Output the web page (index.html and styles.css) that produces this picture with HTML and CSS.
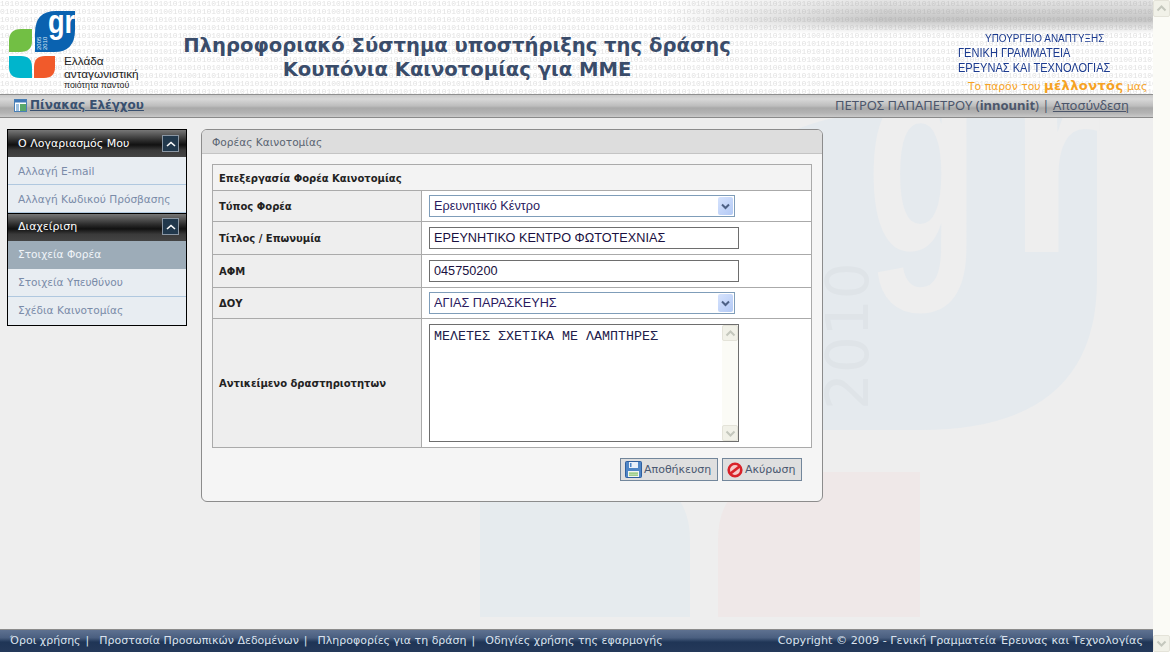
FILE: index.html
```html
<!DOCTYPE html>
<html lang="el">
<head>
    <meta charset="UTF-8">
    <title>Κουπόνια Καινοτομίας για ΜΜΕ</title>
    <link rel="stylesheet" href="styles.css">
</head>
<body>
<div class="window">
    <div class="page">
        <header class="top">
            <svg class="logo" width="160" height="94" viewBox="0 0 160 94">
                <path d="M9 52 L9 41 Q9 29 21 29 L32 29 L32 41 Q32 52 20 52 Z" fill="#72bf44"/>
                <path d="M9 56 L21 56 Q32 56 32 67 L32 78 L20 78 Q9 78 9 67 Z" fill="#00b5cc"/>
                <path d="M34 78 L34 67 Q34 56 45 56 L55 56 L55 67 Q55 78 44 78 Z" fill="#f15a2b"/>
                <path d="M35 52 L35 33 Q35 11 56 11 L75 11 L75 30 Q75 52 54 52 Z" fill="#0a62b0"/>
                <text class="logo-gr" transform="translate(48 33) scale(0.8 1)">gr</text>
                <text class="logo-year" transform="translate(41 50) rotate(-90)">2005</text>
                <text class="logo-year" transform="translate(47 50) rotate(-90)">2010</text>
                <text class="logo-big" x="64" y="65">Ελλάδα</text>
                <text class="logo-big" x="64" y="78">ανταγωνιστική</text>
                <text class="logo-small" x="64" y="88">ποιότητα παντού</text>
            </svg>
            <h1 class="title">Πληροφοριακό Σύστημα υποστήριξης της δράσης<br>Κουπόνια Καινοτομίας για ΜΜΕ</h1>
            <div class="ministry">
                <div class="ministry-line ministry-first">ΥΠΟΥΡΓΕΙΟ ΑΝΑΠΤΥΞΗΣ</div>
                <div class="ministry-line">ΓΕΝΙΚΗ ΓΡΑΜΜΑΤΕΙΑ</div>
                <div class="ministry-line">ΕΡΕΥΝΑΣ ΚΑΙ ΤΕΧΝΟΛΟΓΙΑΣ</div>
                <div class="motto">Το παρόν του <span class="motto-big">μέλλοντός</span> μας</div>
            </div>
        </header>

        <nav class="navbar">
            <a class="nav-home" href="#">
                <svg width="13" height="13" viewBox="0 0 13 13">
                    <rect x="0.5" y="0.5" width="12" height="12" fill="#fff" stroke="#4a7fb5"/>
                    <rect x="1" y="1" width="11" height="2.5" fill="#3f78b8"/>
                    <rect x="2" y="5" width="3" height="7" fill="#9cc0e0"/>
                    <rect x="6" y="5" width="6" height="7" fill="#5aa86a"/>
                </svg>
                Πίνακας Ελέγχου
            </a>
            <div class="nav-user">ΠΕΤΡΟΣ ΠΑΠΑΠΕΤΡΟΥ (<b>innounit</b>) | <a href="#">Αποσύνδεση</a></div>
        </nav>

        <div class="main">
            <aside class="side">
                <div class="side-head">Ο Λογαριασμός Μου
                    <span class="side-toggle"><svg width="10" height="6" viewBox="0 0 10 6"><path d="M1 5 L5 1.5 L9 5" fill="none" stroke="#fff" stroke-width="1.6"/></svg></span>
                </div>
                <a class="side-item" href="#">Αλλαγή E-mail</a>
                <a class="side-item" href="#">Αλλαγή Κωδικού Πρόσβασης</a>
                <div class="side-head side-head-next">Διαχείριση
                    <span class="side-toggle"><svg width="10" height="6" viewBox="0 0 10 6"><path d="M1 5 L5 1.5 L9 5" fill="none" stroke="#fff" stroke-width="1.6"/></svg></span>
                </div>
                <a class="side-item active" href="#">Στοιχεία Φορέα</a>
                <a class="side-item" href="#">Στοιχεία Υπευθύνου</a>
                <a class="side-item last" href="#">Σχέδια Καινοτομίας</a>
            </aside>

            <section class="panel">
                <div class="panel-head">Φορέας Καινοτομίας</div>
                <div class="panel-body">
                    <table class="form-table">
                        <colgroup>
                            <col class="col-label">
                            <col>
                        </colgroup>
                        <tr class="row-title">
                            <th colspan="2">Επεξεργασία Φορέα Καινοτομίας</th>
                        </tr>
                        <tr class="row-select">
                            <th>Τύπος Φορέα</th>
                            <td>
                                <div class="select-box">
                                    <select><option>Ερευνητικό Κέντρο</option></select>
                                    <span class="select-arrow"><svg width="9" height="7" viewBox="0 0 9 7"><path d="M1 1.5 L4.5 5 L8 1.5" fill="none" stroke="#4d6185" stroke-width="2"/></svg></span>
                                </div>
                            </td>
                        </tr>
                        <tr class="row-input">
                            <th>Τίτλος / Επωνυμία</th>
                            <td><input type="text" value="ΕΡΕΥΝΗΤΙΚΟ ΚΕΝΤΡΟ ΦΩΤΟΤΕΧΝΙΑΣ"></td>
                        </tr>
                        <tr class="row-input">
                            <th>ΑΦΜ</th>
                            <td><input type="text" value="045750200"></td>
                        </tr>
                        <tr class="row-select">
                            <th>ΔΟΥ</th>
                            <td>
                                <div class="select-box">
                                    <select><option>ΑΓΙΑΣ ΠΑΡΑΣΚΕΥΗΣ</option></select>
                                    <span class="select-arrow"><svg width="9" height="7" viewBox="0 0 9 7"><path d="M1 1.5 L4.5 5 L8 1.5" fill="none" stroke="#4d6185" stroke-width="2"/></svg></span>
                                </div>
                            </td>
                        </tr>
                        <tr class="row-area">
                            <th>Αντικείμενο δραστηριοτητων</th>
                            <td>
                                <div class="area-box">
                                    <textarea>ΜΕΛΕΤΕΣ ΣΧΕΤΙΚΑ ΜΕ ΛΑΜΠΤΗΡΕΣ</textarea>
                                    <div class="fake-scroll">
                                        <span class="scroll-btn"><svg width="11" height="7" viewBox="0 0 11 7"><path d="M1.5 5.5 L5.5 1.5 L9.5 5.5" fill="none" stroke="#c4c7bd" stroke-width="2"/></svg></span>
                                        <span class="scroll-btn"><svg width="11" height="7" viewBox="0 0 11 7"><path d="M1.5 1.5 L5.5 5.5 L9.5 1.5" fill="none" stroke="#c4c7bd" stroke-width="2"/></svg></span>
                                    </div>
                                </div>
                            </td>
                        </tr>
                    </table>
                    <div class="actions">
                        <button class="btn save" type="button">
                            <svg width="17" height="17" viewBox="0 0 17 17">
                                <rect x="0.5" y="0.5" width="16" height="16" rx="1" fill="#4f86c6" stroke="#2f5f9e"/>
                                <rect x="4" y="1" width="9" height="6" fill="#e8f0fa"/>
                                <rect x="5" y="2" width="1.5" height="4" fill="#4f86c6"/>
                                <rect x="3" y="10" width="11" height="6" fill="#f2f5f2"/>
                                <rect x="4" y="11.5" width="9" height="1.2" fill="#7cbf62"/>
                                <rect x="4" y="13.5" width="9" height="1.2" fill="#7cbf62"/>
                            </svg>
                            Αποθήκευση
                        </button>
                        <button class="btn cancel" type="button">
                            <svg width="16" height="16" viewBox="0 0 16 16">
                                <circle cx="8" cy="8" r="6.3" fill="#f6c9c9" stroke="#d9222a" stroke-width="2.6"/>
                                <path d="M3.5 11.5 L12.5 4.5" stroke="#d9222a" stroke-width="2.8"/>
                            </svg>
                            Ακύρωση
                        </button>
                    </div>
                </div>
            </section>
        </div>

        <footer class="bottom">
            <div class="bottom-links">
                <a href="#">Όροι χρήσης</a><span class="sep">|</span>
                <a href="#">Προστασία Προσωπικών Δεδομένων</a><span class="sep">|</span>
                <a href="#">Πληροφορίες για τη δράση</a><span class="sep">|</span>
                <a href="#">Οδηγίες χρήσης της εφαρμογής</a>
            </div>
            <div class="copyright">Copyright © 2009 - Γενική Γραμματεία Έρευνας και Τεχνολογίας</div>
        </footer>
    </div>

    <div class="page-scroll">
        <span class="scroll-btn"><svg width="11" height="7" viewBox="0 0 11 7"><path d="M1.5 5.5 L5.5 1.5 L9.5 5.5" fill="none" stroke="#c4c7bd" stroke-width="2"/></svg></span>
        <span class="scroll-btn"><svg width="11" height="7" viewBox="0 0 11 7"><path d="M1.5 1.5 L5.5 5.5 L9.5 1.5" fill="none" stroke="#c4c7bd" stroke-width="2"/></svg></span>
    </div>
</div>
</body>
</html>
```

FILE: styles.css
```css
* {
    margin: 0;
    padding: 0;
    box-sizing: border-box;
}

html, body {
    height: 652px;
    overflow: hidden;
}

body {
    font-family: "DejaVu Sans", Verdana, sans-serif;
    font-size: 11px;
    background: #eeeeee;
}

a {
    color: inherit;
}

.window {
    display: flex;
    height: 652px;
}

/* the page carries the pale logo as its background */
.page {
    flex: 1;
    display: flex;
    flex-direction: column;
    min-width: 0;
    background: url("data:image/svg+xml,%3Csvg xmlns='http://www.w3.org/2000/svg' width='1153' height='652'%3E%3Cpath d='M718 430 L718 260 Q718 112 900 112 L1097 112 L1097 280 Q1097 430 920 430 Z' fill='%23e5eaee'/%3E%3Cpath d='M480 617 L480 470 L600 470 Q690 470 690 540 L690 617 Z' fill='%23e6ebee'/%3E%3Cpath d='M718 617 L718 540 Q718 472 800 472 L920 472 L920 617 Z' fill='%23efe8e8'/%3E%3Cg font-family='Liberation Sans' font-weight='bold' font-size='290' fill='%23eeeeee'%3E%3Ctext transform='translate(866 252) scale(0.64 1)'%3Eg%3C/text%3E%3Ctext transform='translate(1008 252) scale(0.84 1)'%3Er%3C/text%3E%3C/g%3E%3Ctext transform='translate(868 410) rotate(-90)' font-family='DejaVu Sans' font-size='58' fill='%23dfe4e8'%3E2010%3C/text%3E%3C/svg%3E") 0 0 no-repeat;
}

/* header */
.top {
    position: relative;
    height: 94px;
    display: flex;
    background:
        url("data:image/svg+xml,%3Csvg xmlns='http://www.w3.org/2000/svg' width='240' height='48'%3E%3Cg font-family='Liberation Mono' font-size='8' fill='%23e2e2e2'%3E%3Ctext y='6'%3E10101010101010100101010101010101010101010101010101%3C/text%3E%3Ctext y='14'%3E01001010101010101010010101010101010010101010101010%3C/text%3E%3Ctext y='22'%3E10101010101001010101010101010100101010101010101010%3C/text%3E%3Ctext y='30'%3E01010100101010101010101010101010101010100101010101%3C/text%3E%3Ctext y='38'%3E10101010101010101010010101010101010101010100101010%3C/text%3E%3Ctext y='46'%3E01010101010010101010101010101010010101010101010101%3C/text%3E%3C/g%3E%3C/svg%3E") 0 0 / 240px 48px,
        #ffffff;
}

/* grey smear at the top right of the header */
.top::before {
    content: "";
    position: absolute;
    top: 0;
    right: 0;
    width: 490px;
    height: 34px;
    background: linear-gradient(180deg, rgba(150,150,150,0.25) 0, rgba(140,140,140,0.5) 20px, rgba(255,255,255,0) 34px);
    -webkit-mask-image: linear-gradient(90deg, transparent 0, #000 45%);
    mask-image: linear-gradient(90deg, transparent 0, #000 45%);
}

.logo {
    flex: none;
}

.logo-gr {
    font: bold 34px "Liberation Sans", sans-serif;
    fill: #ffffff;
}

.logo-year {
    font: 6px "Liberation Sans", sans-serif;
    fill: #dce9f5;
}

.logo-big {
    font: 11.8px "Liberation Sans", sans-serif;
    fill: #222222;
}

.logo-small {
    font: 8.8px "Liberation Sans", sans-serif;
    fill: #222222;
}

.title {
    flex: none;
    width: 600px;
    margin: 34px 0 0 -3px;
    font-size: 19.6px;
    line-height: 24px;
    font-weight: bold;
    text-align: center;
    color: #3a4c6a;
}

.ministry {
    position: relative;
    width: 195px;
    margin: 30px 0 0 201px;
    font-family: "Liberation Sans", sans-serif;
    font-size: 13px;
    line-height: 15px;
    color: #1b3a8f;
}

.ministry-line {
    width: 170px;
    transform: scaleX(0.85);
    transform-origin: left center;
    white-space: nowrap;
}

.ministry-first {
    margin-left: 27px;
    font-size: 11.7px;
}

.motto {
    margin: 1px 0 0 10px;
    font-family: "DejaVu Sans", sans-serif;
    font-size: 10.8px;
    line-height: 19px;
    color: #f6a223;
    white-space: nowrap;
}

.motto-big {
    font-size: 13px;
    font-weight: bold;
    letter-spacing: 0.4px;
}

/* nav bar */
.navbar {
    height: 24px;
    display: flex;
    justify-content: space-between;
    align-items: center;
    padding: 0 24px 2px 14px;
    border-top: 1px solid #8f8f8f;
    border-bottom: 1px solid #8a8a8a;
    background: linear-gradient(180deg, #c9c9c9 0, #d8d8d8 4px, #bdbdbd 11px, #a9a9a9 13px, #b4b4b4 18px, #c9c9c9 100%);
    color: #4c566b;
}

.nav-home {
    display: flex;
    align-items: center;
    gap: 3px;
    font-size: 12px;
    font-weight: bold;
    color: #39506f;
}

.nav-user {
    font-family: "Noto Sans", sans-serif;
    font-size: 13px;
}

/* main area */
.main {
    flex: 1;
    display: flex;
    align-items: flex-start;
    gap: 14px;
    padding: 11px 0 0 7px;
}

.side {
    width: 180px;
    border: 1px solid #000000;
    background: #e8edf2;
}

.side-head {
    height: 27px;
    display: flex;
    justify-content: space-between;
    align-items: center;
    padding: 0 7px 0 10px;
    background: linear-gradient(180deg, #777777 0, #2a2a2a 40%, #111111 55%, #3a3a3a 75%, #444444 100%);
    color: #ffffff;
}

.side-head-next {
    border-top: 1px solid #000000;
    height: 28px;
    padding-bottom: 2px;
}

.side-toggle {
    width: 17px;
    height: 17px;
    display: flex;
    align-items: center;
    justify-content: center;
    border: 1px solid #8a96a3;
    background: #21384c;
}

.side-item {
    display: block;
    height: 28px;
    padding-left: 10px;
    line-height: 28px;
    font-size: 10.6px;
    border-bottom: 1px solid #b0c8df;
    color: #7a8ba8;
    text-decoration: none;
}

.side-head-next ~ .side-item {
    line-height: 26px;
}

.side-item.active {
    background: #9dacb8;
    color: #f0f4f8;
    border-bottom-color: #9dacb8;
}

.side-item.last {
    border-bottom: 0;
}

.panel {
    width: 622px;
    height: 373px;
    border: 1px solid #8c8c8c;
    border-radius: 6px;
    background: #f5f5f5;
    overflow: hidden;
}

.panel-head {
    height: 24px;
    padding-left: 10px;
    line-height: 25px;
    font-size: 10.6px;
    background: #dddddd;
    border-bottom: 1px solid #c4c4c4;
    color: #5a6472;
}

.panel-body {
    padding: 10px 10px 0;
}

.form-table {
    width: 600px;
    border-collapse: collapse;
    border: 1px solid #aaaaaa;
    table-layout: fixed;
}

.col-label {
    width: 209px;
}

.form-table th {
    padding-left: 6px;
    text-align: left;
    font-size: 10px;
    background: #eeeeee;
    border: 1px solid #aaaaaa;
    color: #222222;
}

.form-table td {
    padding-left: 7px;
    background: #ffffff;
    border: 1px solid #aaaaaa;
}

.row-title th {
    height: 26px;
    padding-top: 2px;
    background: #f3f3f3;
}

.row-select th, .row-select td {
    height: 31px;
}

.row-input th, .row-input td {
    height: 33px;
}

.row-area th, .row-area td {
    height: 129px;
}

.select-box {
    position: relative;
    width: 306px;
    height: 22px;
}

select {
    display: block;
    width: 100%;
    height: 22px;
    padding-left: 4px;
    border: 1px solid #7f9db9;
    border-radius: 0;
    background: #ffffff;
    appearance: none;
    font: 12.7px "Liberation Sans", sans-serif;
    color: #2a1a5e;
}

.select-arrow {
    position: absolute;
    top: 2px;
    right: 2px;
    width: 15px;
    height: 18px;
    display: flex;
    align-items: center;
    justify-content: center;
    border-radius: 2px;
    background: linear-gradient(135deg, #d6e3fd, #b3c9f5);
}

input {
    display: block;
    width: 310px;
    height: 22px;
    padding-left: 4px;
    border: 1px solid #6e6e6e;
    font: 12.7px "Liberation Sans", sans-serif;
    color: #1a1040;
}

.area-box {
    position: relative;
    width: 310px;
    height: 118px;
}

textarea {
    display: block;
    width: 310px;
    height: 118px;
    padding: 4px 22px 2px 4px;
    border: 1px solid #6e6e6e;
    resize: none;
    overflow: hidden;
    font: 13.33px "Liberation Mono", monospace;
    color: #22204a;
}

.fake-scroll {
    position: absolute;
    top: 1px;
    right: 1px;
    bottom: 1px;
    width: 16px;
    display: flex;
    flex-direction: column;
    justify-content: space-between;
    background: #fbfbf6;
}

.scroll-btn {
    width: 16px;
    height: 16px;
    display: flex;
    align-items: center;
    justify-content: center;
    border: 1px solid #e4e3d9;
    border-radius: 2px;
    background: #f1f1e8;
}

.actions {
    display: flex;
    justify-content: flex-end;
    gap: 4px;
    margin: 10px 10px 0 0;
}

.btn {
    height: 23px;
    display: flex;
    align-items: center;
    gap: 2px;
    padding: 0 4px;
    border: 1px solid #72869b;
    background: #dfdfdf;
    font: 11px "DejaVu Sans", sans-serif;
    color: #4a5870;
}

.save {
    width: 98px;
}

.cancel {
    width: 80px;
}

/* footer */
.bottom {
    height: 23px;
    display: flex;
    justify-content: space-between;
    align-items: center;
    padding: 0 10px 2px;
    border-top: 1px solid #8c8c8c;
    background: linear-gradient(180deg, #5e7190 0, #4a5f80 35%, #1f3556 55%, #24395a 100%);
    color: #dbe3ee;
}

.bottom-links {
    display: flex;
}

.bottom a {
    text-decoration: none;
}

.sep {
    margin: 0 10px 0 5px;
}

.copyright {
    font-size: 11.2px;
}

/* browser scrollbar */
.page-scroll {
    flex: none;
    width: 17px;
    display: flex;
    flex-direction: column;
    justify-content: space-between;
    background: #fbfbf6;
}

.page-scroll .scroll-btn {
    width: 17px;
    height: 17px;
}
```
